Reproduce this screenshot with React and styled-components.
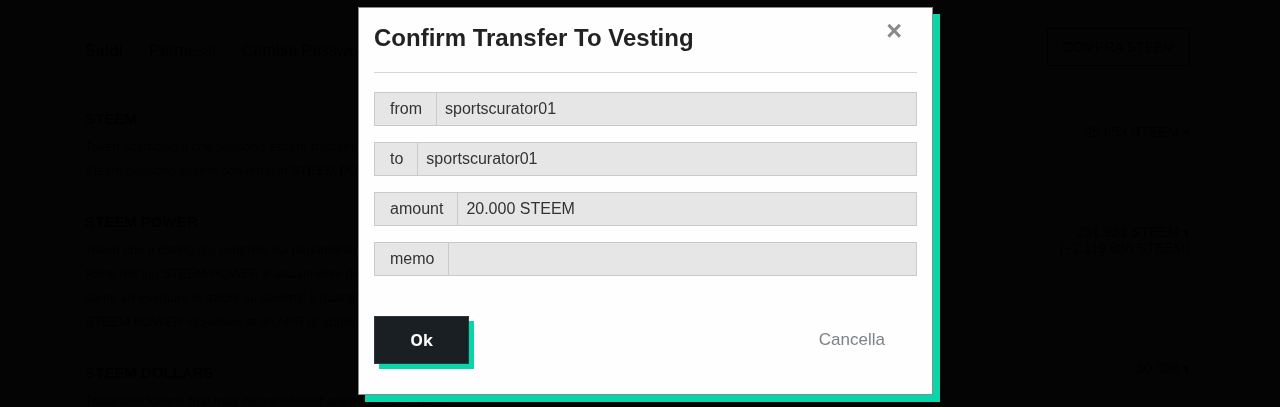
import React from "react";
import styled, { createGlobalStyle } from "styled-components";

const Global = createGlobalStyle`
  html, body { margin: 0; padding: 0; background: #fff; }
  body { font-family: "Liberation Sans", Arial, sans-serif; overflow: hidden; }
  * { box-sizing: border-box; }
`;

const Page = styled.div`
  width: 1280px;
  height: 407px;
  overflow: hidden;
  padding: 22px 80px 0 85px;
  display: grid;
  grid-template-columns: 1fr 260px;
  column-gap: 20px;
  color: #111;
  background: #fff;
`;

const Tabs = styled.div`
  display: flex;
  gap: 26px;
  font-size: 16px;
  padding-top: 20px;
  height: 88px;
`;

const Tab = styled.span`
  font-weight: ${(p) => (p.$active ? "bold" : "normal")};
`;

const Section = styled.div`
  margin-bottom: 30px;
`;

const SectionTitle = styled.div`
  font-size: 15px;
  font-weight: bold;
  margin-bottom: 8px;
`;

const SectionText = styled.div`
  font-size: 13px;
  line-height: 24px;
  white-space: nowrap;
`;

const Side = styled.div`
  display: flex;
  flex-direction: column;
  align-items: flex-end;
  font-size: 14px;
`;

const BuyButton = styled.div`
  border: 1px solid #333;
  padding: 10px 14px;
  margin-top: 6px;
  margin-right: 10px;
  margin-bottom: 58px;
`;

const Amount = styled.div`
  margin-right: 10px;
  margin-bottom: ${(p) => p.$mb || 0}px;
`;

const Overlay = styled.div`
  position: fixed;
  inset: 0;
  background: rgba(0, 0, 0, 0.985);
  display: flex;
  justify-content: center;
  align-items: flex-start;
  padding-left: 11px;
  padding-top: 7px;
`;

const Modal = styled.div`
  position: relative;
  width: 575px;
  height: 388px;
  background: #fefefe;
  border: 1px solid #8a8a8a;
  box-shadow: 7px 7px 0 #06d6a9;
  padding: 0 15px;
`;

const Title = styled.h2`
  margin: 0;
  padding: 17px 0 21px;
  font-size: 24px;
  line-height: 26px;
  font-weight: bold;
  color: #222;
  border-bottom: 1px solid #d6d6d6;
`;

const Close = styled.button`
  position: absolute;
  top: 9px;
  right: 30px;
  border: 0;
  background: none;
  padding: 0;
  font-family: "Liberation Sans", Arial, sans-serif;
  font-size: 27px;
  line-height: 28px;
  color: #8a8a8a;
  font-weight: bold;
  cursor: pointer;
`;

const Fields = styled.div`
  display: flex;
  flex-direction: column;
  gap: 16px;
  padding-top: 19px;
`;

const Row = styled.div`
  display: flex;
  height: 34px;
  border: 1px solid #cacaca;
  background: #e6e6e6;
  font-size: 16px;
  color: #222;
`;

const Label = styled.span`
  display: flex;
  align-items: center;
  padding: 0 14px 0 15px;
  border-right: 1px solid #cacaca;
  color: #333;
`;

const Value = styled.span`
  display: flex;
  align-items: center;
  padding: 0 8px;
  flex: 1;
  color: #333;
`;

const Footer = styled.div`
  display: flex;
  justify-content: space-between;
  align-items: center;
  margin-top: 40px;
`;

const OkButton = styled.button`
  width: 95px;
  height: 48px;
  background: #1a1f24;
  color: #fff;
  border: 1px solid #30363c;
  box-shadow: 5px 5px 0 #06d6a9;
  font-family: "Open Sans", sans-serif;
  font-weight: 700;
  font-size: 16px;
  cursor: pointer;
`;

const CancelButton = styled.button`
  background: none;
  border: 0;
  color: #7c8288;
  font-family: "Liberation Sans", Arial, sans-serif;
  font-size: 17px;
  margin-right: 26px;
  cursor: pointer;
`;

const fields = [
  { label: "from", value: "sportscurator01" },
  { label: "to", value: "sportscurator01" },
  { label: "amount", value: "20.000 STEEM" },
  { label: "memo", value: "" },
];

export default function App() {
  return (
    <>
      <Global />
      <Page>
        <div>
          <Tabs>
            <Tab $active>Saldi</Tab>
            <Tab>Permessi</Tab>
            <Tab>Cambia Password</Tab>
          </Tabs>
          <Section>
            <SectionTitle>STEEM</SectionTitle>
            <SectionText>
              Token scambiabili che possono essere trasferiti ovunque in qualsiasi momento.
              <br />
              Steem possono essere convertiti in STEEM POWER con un processo chiamato powering up.
            </SectionText>
          </Section>
          <Section>
            <SectionTitle>STEEM POWER</SectionTitle>
            <SectionText>
              Token che ti danno più controllo sul pagamento dei post e permettono di guadagnare.
              <br />
              Parte del tuo STEEM POWER è attualmente delegato. La delega è donata per aiutare nuovi
              <br />
              utenti ad eseguire le azioni su steemit. Il quantitativo delegato può variare.
              <br />
              STEEM POWER increases at an APR of approximately 3.06%, subject to blockchain variance.
            </SectionText>
          </Section>
          <Section>
            <SectionTitle>STEEM DOLLARS</SectionTitle>
            <SectionText>Tradeable tokens that may be transferred anywhere at anytime.</SectionText>
          </Section>
        </div>
        <Side>
          <BuyButton>COMPRA STEEM</BuyButton>
          <Amount $mb={84}>25.653 STEEM ▾</Amount>
          <Amount>231.933 STEEM ▾</Amount>
          <Amount $mb={104}>(+2,119.838 STEEM)</Amount>
          <Amount>$0.000 ▾</Amount>
        </Side>
      </Page>
      <Overlay>
        <Modal>
          <Close aria-label="close">×</Close>
          <Title>Confirm Transfer To Vesting</Title>
          <Fields>
            {fields.map((f) => (
              <Row key={f.label}>
                <Label>{f.label}</Label>
                <Value>{f.value}</Value>
              </Row>
            ))}
          </Fields>
          <Footer>
            <OkButton>Ok</OkButton>
            <CancelButton>Cancella</CancelButton>
          </Footer>
        </Modal>
      </Overlay>
    </>
  );
}
